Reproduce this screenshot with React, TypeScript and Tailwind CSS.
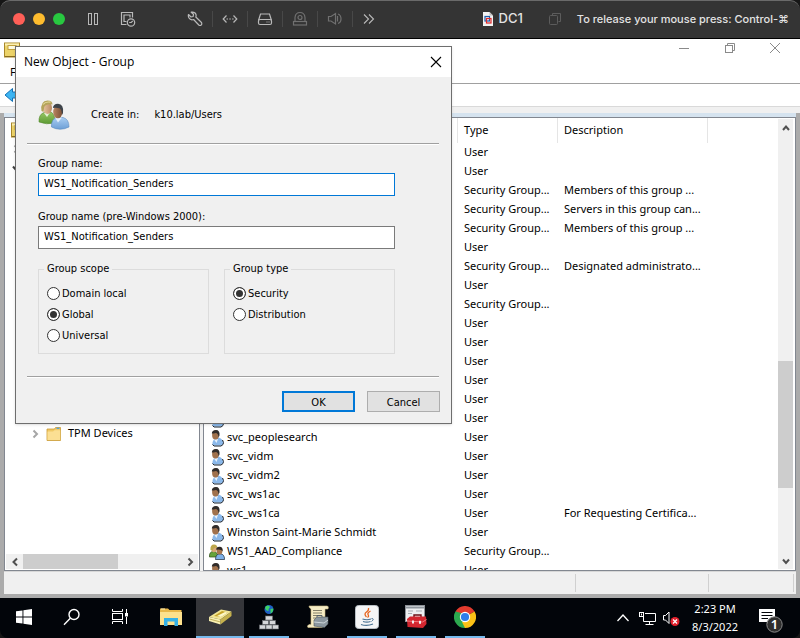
import React, { useState } from 'react';
import clsx from 'clsx';

type Kind = 'user' | 'group';

interface DirectoryEntry {
  kind: Kind;
  name?: string;
  type: string;
  description?: string;
}

const user = (name?: string, description?: string): DirectoryEntry => ({
  kind: 'user',
  name,
  type: 'User',
  description,
});

const group = (description?: string, name?: string): DirectoryEntry => ({
  kind: 'group',
  name,
  type: 'Security Group...',
  description,
});

const ENTRIES: DirectoryEntry[] = [
  user(),
  user(),
  group('Members of this group ...'),
  group('Servers in this group can...'),
  group('Members of this group ...'),
  user(),
  group('Designated administrato...'),
  user(),
  group(),
  user(),
  user(),
  user(),
  user(),
  user(),
  user('svc_'),
  user('svc_peoplesearch'),
  user('svc_vidm'),
  user('svc_vidm2'),
  user('svc_ws1ac'),
  user('svc_ws1ca', 'For Requesting Certifica...'),
  user('Winston Saint-Marie Schmidt'),
  group('', 'WS1_AAD_Compliance'),
  user('ws1'),
];

const UserIcon = () => (
  <svg width="16" height="18" viewBox="0 0 16 18" className="shrink-0">
    <path d="M3.500 16 Q3 11 6.500 9.500 L9.500 8.500 Q13.500 9.500 14 13 L14 15 L12 16.500 L5 16.500 Z" fill="#8ab8ea" />
    <path d="M13.500 11 L14.500 13.500 L14 15.500 L12 17 H5 L3.500 15.500" fill="none" stroke="#1b2430" />
    <path d="M5 10.500 L7.500 14 L9 10 Z" fill="#e8f2fd" />
    <ellipse cx="6.500" cy="6" rx="3.400" ry="4.500" fill="#a0714c" />
    <path d="M2.800 4.500 Q3 1 7 1 Q11 1 10.500 6.500 L9.500 8.500 Q9.500 4.500 7 4 Q4.500 4.500 2.800 4.500 Z" fill="#302c2a" />
  </svg>
);

const GroupIcon = () => (
  <svg width="16" height="16" viewBox="0 0 16 16" className="shrink-0">
    <path d="M0.500 13 Q0 7.500 4.500 7.500 Q8.500 7.500 9 13 Z" fill="#67a33b" stroke="#2b4a16" strokeWidth="0.7" />
    <ellipse cx="5" cy="4.600" rx="2.800" ry="3.600" fill="#d9a877" />
    <path d="M1.500 6 Q1 0.500 5 0.500 Q8.500 0.500 8.300 4 Q5 2.500 3.500 6.500 Z" fill="#bda64a" />
    <path d="M6.500 15.500 Q6.500 10 11 9.800 Q15.500 9.800 15.600 15.500 Z" fill="#7fb0e6" stroke="#1d2a3a" strokeWidth="0.7" />
    <ellipse cx="10.500" cy="7" rx="2.900" ry="3.600" fill="#a8754c" />
    <path d="M7.200 5.800 Q7 2.800 10.500 2.800 Q14.300 2.800 13.600 7.500 Q12.500 5 7.200 5.800 Z" fill="#2b2522" />
  </svg>
);

const GroupLargeIcon = () => (
  <svg width="32" height="32" viewBox="0 0 32 32" className="shrink-0">
    <defs>
      <linearGradient id="green-shirt" x1="0" x2="0" y1="0" y2="1">
        <stop offset="0" stopColor="#97c765" />
        <stop offset="1" stopColor="#5c9a33" />
      </linearGradient>
      <linearGradient id="blue-shirt" x1="0" x2="0" y1="0" y2="1">
        <stop offset="0" stopColor="#a9cdf2" />
        <stop offset="1" stopColor="#6d9fd6" />
      </linearGradient>
      <linearGradient id="face-left" x1="0" x2="1">
        <stop offset="0" stopColor="#e6c3a0" />
        <stop offset="1" stopColor="#b98a62" />
      </linearGradient>
      <linearGradient id="face-right" x1="0" x2="1">
        <stop offset="0" stopColor="#b98560" />
        <stop offset="1" stopColor="#7a4f35" />
      </linearGradient>
    </defs>
    <path d="M1 23 Q0.500 15.500 6 13.500 L13 13 Q17 15 17 24 Q8 26 1 23 Z" fill="url(#green-shirt)" stroke="#548a2e" strokeWidth="0.6" />
    <path d="M6 14 L9 18 L12 13.500 Z" fill="#e3f1d4" />
    <ellipse cx="9.500" cy="9" rx="4.500" ry="6" fill="url(#face-left)" />
    <path d="M3.500 12 Q2 2 9.500 1.500 Q14.500 1.500 14.500 5.500 Q8 4.500 6.200 8 L5.500 13 Z" fill="#b5a45a" />
    <path d="M5 5.500 Q7.500 2.300 12.500 3.200" stroke="#e2d898" strokeWidth="1.200" fill="none" />
    <path d="M13.500 28 Q13 20 19 18.500 L25 18.500 Q31 20 31 28 Q22 32.500 13.500 28 Z" fill="url(#blue-shirt)" stroke="#5788bf" strokeWidth="0.6" />
    <path d="M17 18.500 L20 23.500 L24 18.500 Z" fill="#e4effb" />
    <ellipse cx="19.800" cy="13" rx="4.600" ry="6.300" fill="url(#face-right)" />
    <path d="M15 9 Q15 5 20 4.800 Q26 5 25 14 L24 16 Q24 11 21.500 9.200 Q18 8.500 15 9 Z" fill="#3e4349" />
  </svg>
);

const DirectoryIcon = () => (
  <svg width="16" height="16" viewBox="0 0 16 16" className="shrink-0">
    <rect x="0.500" y="1" width="15" height="14" fill="#ecd36a" stroke="#a8872a" />
    <rect x="1" y="1.500" width="14" height="2" fill="#fbf0b4" />
    <rect x="4" y="3.500" width="8" height="4" fill="#fffbe0" stroke="#c1a03c" />
    <path d="M1 14.500 H15" stroke="#8a6c1d" />
  </svg>
);

const FolderIcon = () => (
  <svg width="16" height="16" viewBox="0 0 16 16" className="shrink-0">
    <path d="M1 14.500 V3 H8.500 L9.500 1.500 H14.500 V14.500 Z" fill="#f0c965" stroke="#c99a35" strokeWidth="0.8" />
    <path d="M10.500 2.300 H13.500" stroke="#4a9fe0" strokeWidth="1.200" />
    <path d="M1.500 14 V5.500 H7 L8.500 4.200 H14.200 V14 Z" fill="#fbdf93" />
  </svg>
);

const Chevron = ({ dir, className }: { dir: 'up' | 'down' | 'left' | 'right'; className?: string }) => {
  const paths = {
    up: 'M2 7 L5 3.500 L8 7',
    down: 'M2 3.500 L5 7 L8 3.500',
    left: 'M7 1.500 L3.500 5 L7 8.500',
    right: 'M3.500 1.500 L7 5 L3.500 8.500',
  };
  return (
    <svg width="10" height="10" viewBox="0 0 10 10" className={className}>
      <path d={paths[dir]} fill="none" stroke="currentColor" strokeWidth="2" />
    </svg>
  );
};

const BarSeparator = () => <span className="h-4 w-px bg-[#484848]" />;

const VmToolbar = () => (
  <header className="flex h-[39px] shrink-0 items-center rounded-t-[10px] border-t border-b border-t-[#6a6a6a] border-b-black bg-[#343434] pr-[11px] pb-px pl-[13px] font-['Inter',sans-serif] text-[#e3e3e3]">
    <div className="flex gap-2">
      <button aria-label="Close" className="size-3 rounded-full bg-[#ff5f57]" />
      <button aria-label="Minimize" className="size-3 rounded-full bg-[#febc2e]" />
      <button aria-label="Zoom" className="size-3 rounded-full bg-[#28c840]" />
    </div>
    <div className="ml-5 flex gap-[19px] text-[#b9b9b9]">
      <button aria-label="Pause">
        <svg width="16" height="16" viewBox="0 0 16 16" fill="none" stroke="currentColor">
          <rect x="3.500" y="2.500" width="3" height="11" />
          <rect x="9.500" y="2.500" width="3" height="11" />
        </svg>
      </button>
      <button aria-label="Snapshots">
        <svg width="16" height="16" viewBox="0 0 16 16" fill="none" stroke="currentColor" strokeWidth="1.200">
          <path d="M6.500 13.500 H1.500 V1.500 H12.500 V6.500" />
          <path d="M6.500 10.500 H4 V4 H10 V6.500" />
          <circle cx="11" cy="11.500" r="3.700" />
          <path d="M9.200 11.500 H11.200 L12.800 9.800" />
        </svg>
      </button>
    </div>
    <div className="ml-[51px] flex items-center gap-[9px] text-[#b9b9b9]">
      <button aria-label="Settings">
        <svg width="16" height="16" viewBox="0 0 16 16" fill="none" stroke="currentColor" strokeWidth="1.200" strokeLinejoin="round">
          <path d="M1.500 3.500 L4 6 L6.200 5.500 L6.500 3.200 L4.200 1.200 Q8 0.500 9 3.500 Q9.300 5 8.800 6 L14.500 11.500 Q15.200 13 14.200 14 Q13 15 11.800 14 L6.600 8.500 Q3.500 9.500 2 7 Q1 5.500 1.500 3.500 Z" />
        </svg>
      </button>
      <BarSeparator />
      <button aria-label="Network adapter">
        <svg width="16" height="16" viewBox="0 0 16 16" fill="none" stroke="currentColor" strokeWidth="1.200">
          <path d="M4.500 4.500 L1.200 8 L4.500 11.500 M11.500 4.500 L14.800 8 L11.500 11.500" />
          <path d="M4.500 8 H12" strokeDasharray="1.500 1.300" />
        </svg>
      </button>
      <BarSeparator />
      <button aria-label="Hard disk">
        <svg width="16" height="16" viewBox="0 0 16 16" fill="none" stroke="currentColor" strokeWidth="1.200">
          <path d="M1.500 9.500 L3.500 3 H12.500 L14.500 9.500" />
          <rect x="1.500" y="8.500" width="13" height="5" rx="1.500" />
          <path d="M9.500 11 H10.500 M11.500 11 H12.500" />
        </svg>
      </button>
      <BarSeparator />
      <button aria-label="Camera" className="text-[#707070]">
        <svg width="16" height="16" viewBox="0 0 16 16" fill="none" stroke="currentColor" strokeWidth="1.200">
          <path d="M3 10.500 V6.500 Q3.500 1.500 8 1.500 Q12.500 1.500 13 6.500 V10.500" />
          <circle cx="8" cy="6.500" r="2" />
          <rect x="1.500" y="10.500" width="13" height="3.500" />
        </svg>
      </button>
      <BarSeparator />
      <button aria-label="Sound" className="text-[#707070]">
        <svg width="16" height="16" viewBox="0 0 16 16" fill="none" stroke="currentColor" strokeWidth="1.200">
          <path d="M1.500 5.500 H4 L8.500 2.500 V13 L4 10 H1.500 Z M10.500 5 V10.500" />
          <path d="M11 3 Q14 4 14 7.800 Q14 11.500 11 12.500" />
        </svg>
      </button>
      <BarSeparator />
      <button aria-label="More">
        <svg width="16" height="16" viewBox="0 0 16 16" fill="none" stroke="currentColor" strokeWidth="1.100">
          <path d="M2 3.500 L6.500 8 L2 12.500 M7 3.500 L11.500 8 L7 12.500" />
        </svg>
      </button>
    </div>
    <div className="ml-auto flex items-center">
      <svg width="16" height="16" viewBox="0 0 16 16">
        <path d="M3 1 H9.500 L13 4.500 V15 H3 Z" fill="#f2f2f2" />
        <path d="M9.500 1 V4.500 H13 Z" fill="#bdbdbd" />
        <rect x="5" y="5.500" width="4.500" height="4.500" fill="none" stroke="#1c5fb0" strokeWidth="1.200" />
        <rect x="6.500" y="7.500" width="4.500" height="4.500" fill="none" stroke="#e02929" strokeWidth="1.200" />
      </svg>
      <h1 className="ml-[3px] text-[13px] font-medium">DC1</h1>
      <button aria-label="Window mode" className="ml-6 text-[#5c5c5c]">
        <svg width="16" height="16" viewBox="0 0 16 16" fill="none" stroke="currentColor">
          <path d="M5.500 4.500 V2.500 H13.500 V10.500 H11.500" />
          <rect x="2.500" y="4.500" width="8" height="9" rx="1" />
        </svg>
      </button>
      <span className="ml-[14px] text-[11px] font-medium whitespace-nowrap">To release your mouse press: Control-⌘</span>
    </div>
  </header>
);

const WindowChrome = () => (
  <div className="shrink-0 bg-white">
    <div className="flex h-[22px] items-start pl-1 text-[#8a8a8a]">
      <div className="flex items-center gap-[5px] pt-[3px]">
        <DirectoryIcon />
        <span className="leading-4">Active Directory Users and Computers</span>
      </div>
      <div className="ml-auto flex pr-[2px]">
        <button aria-label="Minimize" className="flex h-[18px] w-[46px] items-center justify-center">
          <svg width="10" height="10" viewBox="0 0 10 10" stroke="currentColor"><path d="M0 5.500 H10" /></svg>
        </button>
        <button aria-label="Restore" className="flex h-[18px] w-[45px] items-center justify-center">
          <svg width="10" height="10" viewBox="0 0 10 10" fill="none" stroke="currentColor">
            <rect x="0.500" y="2.500" width="7" height="7" />
            <path d="M2.500 2.500 V0.500 H9.500 V7.500 H7.500" />
          </svg>
        </button>
        <button aria-label="Close" className="flex h-[18px] w-[46px] items-center justify-center">
          <svg width="10" height="10" viewBox="0 0 10 10" stroke="currentColor"><path d="M0 0 L10 10 M10 0 L0 10" /></svg>
        </button>
      </div>
    </div>
    <nav className="flex h-[22px] items-center pl-[10px] text-black">
      <button>File</button>
    </nav>
    <div className="flex h-[23px] items-center border-t border-t-[#a0a0a0] pl-1">
      <button aria-label="Back">
        <svg width="16" height="16" viewBox="0 0 16 16">
          <path d="M1 8 L8.500 1.500 V5 H15.500 V11 H8.500 V14.500 Z" fill="#3db5f2" stroke="#1572b6" />
        </svg>
      </button>
    </div>
    <div className="h-[7px] border-t border-t-[#d9d9d9] bg-[#f0f0f0]" />
  </div>
);

const TreePane = () => (
  <aside className="flex w-[196px] shrink-0 flex-col border border-[#828790] bg-white p-px">
    <ul className="min-h-0 flex-1 overflow-hidden pt-px">
      <li className="flex h-[19px] items-center pl-[5px]"><DirectoryIcon /></li>
      <li className="flex h-[19px] items-center pl-[5px] text-[#a0a0a0]"><Chevron dir="right" /></li>
      <li className="flex h-[19px] items-center pl-[5px] text-[#404040]"><Chevron dir="down" /></li>
      {Array.from({ length: 13 }, (_, i) => (
        <li key={i} className="h-[19px]" />
      ))}
      <li className="flex h-[19px] items-center pl-6">
        <Chevron dir="right" className="text-[#a6a6a6]" />
        <span className="ml-[6px]"><FolderIcon /></span>
        <span className="ml-[6px]">TPM Devices</span>
      </li>
    </ul>
    <div className="flex h-[15px] shrink-0 bg-[#f0f0f0] text-[#505050]">
      <button aria-label="Scroll left" className="flex w-[17px] items-center justify-center"><Chevron dir="left" /></button>
      <div className="flex flex-1">
        <div className="w-3/5 bg-[#cdcdcd]" />
      </div>
      <button aria-label="Scroll right" className="flex w-[17px] items-center justify-center"><Chevron dir="right" /></button>
    </div>
  </aside>
);

const ListPane = () => (
  <section className="flex min-w-0 flex-1 border border-[#828790] bg-white">
    <div className="min-h-0 min-w-0 flex-1 overflow-hidden">
      <table className="w-full table-fixed border-separate border-spacing-0 text-left whitespace-nowrap">
        <colgroup>
          <col className="w-[254px]" />
          <col className="w-[100px]" />
          <col className="w-[150px]" />
          <col />
        </colgroup>
        <thead>
          <tr className="h-[25px]">
            <th className="border-r border-r-[#e5e5e5] p-0 pl-[6px] font-normal" aria-label="Name" />
            <th className="border-r border-r-[#e5e5e5] p-0 pl-[6px] font-normal">Type</th>
            <th className="border-r border-r-[#e5e5e5] p-0 pl-[6px] font-normal">Description</th>
            <th className="p-0" />
          </tr>
        </thead>
        <tbody>
          {ENTRIES.map((entry, i) => (
            <tr key={i} className="h-[19px]">
              <td className="p-0 pl-[5px]">
                <div className="flex h-[19px] items-center gap-[2px]">
                  {entry.kind === 'user' ? <UserIcon /> : <GroupIcon />}
                  {entry.name}
                </div>
              </td>
              <td className="p-0 pl-[6px]">{entry.type}</td>
              <td className="p-0 pl-[6px]">{entry.description}</td>
              <td className="p-0" />
            </tr>
          ))}
        </tbody>
      </table>
    </div>
    <div className="my-px mr-[2px] flex w-[15px] shrink-0 flex-col bg-[#f0f0f0] text-[#505050]">
      <button aria-label="Scroll up" className="flex h-[17px] items-center justify-center"><Chevron dir="up" /></button>
      <div className="flex-[225]" />
      <div className="flex-[127] bg-[#cdcdcd]" />
      <div className="flex-[64]" />
      <button aria-label="Scroll down" className="flex h-[17px] items-center justify-center"><Chevron dir="down" /></button>
    </div>
  </section>
);

interface RadioGroupProps {
  title: string;
  name: string;
  options: string[];
  value: string;
  onChange: (value: string) => void;
}

const RadioGroup = ({ title, name, options, value, onChange }: RadioGroupProps) => (
  <fieldset className="border border-[#dcdcdc] px-2 pt-[6px] pb-[7px]">
    <legend className="-ml-[3px] px-[3px] leading-4">{title}</legend>
    {options.map((option) => (
      <label key={option} className="flex h-[21px] items-center gap-[2px]">
        <input
          type="radio"
          name={name}
          checked={value === option}
          onChange={() => onChange(option)}
          className="size-[13px] appearance-none rounded-full border border-[#333] bg-white checked:bg-[#333] checked:shadow-[inset_0_0_0_2px_#fff]"
        />
        <span className="pt-px">{option}</span>
      </label>
    ))}
  </fieldset>
);

const Divider = () => <div className="mr-3 ml-[11px] h-[2px] border-t border-t-[#a0a0a0] bg-white" />;

const NewGroupDialog = () => {
  const [name, setName] = useState('WS1_Notification_Senders');
  const [legacyName, setLegacyName] = useState('WS1_Notification_Senders');
  const [scope, setScope] = useState('Global');
  const [type, setType] = useState('Security');

  return (
    <div
      role="dialog"
      aria-label="New Object - Group"
      className="absolute top-[7px] left-[15px] w-[437px] border border-[#6e6e6e] bg-[#f0f0f0] font-['DejaVu_Sans_Condensed','Noto_Sans',sans-serif] text-[11px] text-black shadow-sm"
    >
      <div className="flex h-[30px] items-center justify-between bg-white pr-[9px] pl-2 font-['Open_Sans',sans-serif] text-[12px]">
        <h2>New Object - Group</h2>
        <button aria-label="Close">
          <svg width="12" height="12" viewBox="0 0 12 12" stroke="currentColor" strokeWidth="1.100">
            <path d="M1 1 L11 11 M11 1 L1 11" />
          </svg>
        </button>
      </div>
      <div className="flex h-[54px] items-end pl-[22px]">
        <GroupLargeIcon />
        <div className="ml-[21px] flex h-8 items-center gap-[15px] pt-px">
          <span>Create in:</span>
          <span>k10.lab/Users</span>
        </div>
      </div>
      <div className="mt-3">
        <Divider />
      </div>
      <div className="pr-14 pl-[22px]">
        <label htmlFor="group-name" className="mt-[11px] block leading-4">Group name:</label>
        <input
          id="group-name"
          value={name}
          onChange={(e) => setName(e.target.value)}
          className="mt-px block h-[23px] w-full border border-[#0078d7] bg-white px-[5px] pb-[2px] outline-none"
        />
        <label htmlFor="legacy-name" className="mt-[13px] block leading-4">Group name (pre-Windows 2000):</label>
        <input
          id="legacy-name"
          value={legacyName}
          onChange={(e) => setLegacyName(e.target.value)}
          className="mt-px block h-[23px] w-full border border-[#7a7a7a] bg-white px-[5px] pb-[2px] outline-none"
        />
        <div className="mt-3 grid grid-cols-2 gap-[15px]">
          <RadioGroup title="Group scope" name="scope" options={['Domain local', 'Global', 'Universal']} value={scope} onChange={setScope} />
          <RadioGroup title="Group type" name="type" options={['Security', 'Distribution']} value={type} onChange={setType} />
        </div>
      </div>
      <div className="mt-[22px]">
        <Divider />
      </div>
      <div className="mt-[13px] mb-[11px] flex justify-end gap-3 pr-[11px]">
        <button className="h-[21px] w-[73px] border-2 border-[#0078d7] bg-[#e1e1e1] leading-[19px]">OK</button>
        <button className="h-[21px] w-[73px] border border-[#adadad] bg-[#e1e1e1] pt-px leading-[19px]">Cancel</button>
      </div>
    </div>
  );
};

interface TaskButtonProps {
  label: string;
  active?: boolean;
  running?: boolean;
  children: React.ReactNode;
}

const TaskButton = ({ label, active, running, children }: TaskButtonProps) => (
  <button
    aria-label={label}
    className={clsx('flex h-full w-12 flex-col items-center', active && 'bg-[#35363a]')}
  >
    <span className="flex flex-1 items-center">{children}</span>
    <span className={clsx('h-[2px]', active ? 'w-full' : 'w-10', (active || running) && 'bg-[#76b9ed]')} />
  </button>
);

const Taskbar = () => (
  <footer className="flex h-10 shrink-0 items-stretch rounded-b-[8px] bg-[#02050a] text-white">
    <TaskButton label="Start">
      <svg width="16" height="16" viewBox="0 0 16 16" fill="#fff">
        <path d="M0 2.300 L6.500 1.400 V7.500 H0 Z M7.400 1.300 L16 0 V7.500 H7.400 Z M0 8.400 H6.500 V14.600 L0 13.700 Z M7.400 8.400 H16 V16 L7.400 14.700 Z" />
      </svg>
    </TaskButton>
    <TaskButton label="Search">
      <svg width="18" height="18" viewBox="0 0 18 18" fill="none" stroke="#fff" strokeWidth="1.400">
        <circle cx="11" cy="6.500" r="5" />
        <path d="M7.300 10.200 L1 16.800" />
      </svg>
    </TaskButton>
    <TaskButton label="Task View">
      <svg width="18" height="18" viewBox="0 0 18 18" fill="none" stroke="#fff">
        <path d="M1.500 1 V3.500 H11.500 V1 M1.500 16 V13.500 H11.500 V16" />
        <rect x="1.500" y="5.500" width="10" height="6" />
        <path d="M15.500 1 V5 M15.500 9 V16" />
        <rect x="14.500" y="5.500" width="2" height="2.500" fill="#fff" />
      </svg>
    </TaskButton>
    <div className="ml-[3px] flex gap-px">
      <TaskButton label="File Explorer">
        <svg width="22" height="20" viewBox="0 0 22 20">
          <path d="M0 2.500 V1.500 H8 L9.500 3 H21.500 V18 H0 Z" fill="#e9b84a" />
          <path d="M1 2 H5" stroke="#fff3b8" />
          <path d="M0 5 H22 V18 H0 Z" fill="#fde18d" />
          <path d="M4 19 V11 H18 V19 H14.500 V14.500 H7.500 V19 Z" fill="#35b1e8" />
        </svg>
      </TaskButton>
      <TaskButton label="Active Directory Users and Computers" active>
        <svg width="24" height="18" viewBox="0 0 24 18">
          <path d="M1 9 L13 1.500 L23.500 3.500 L12.500 11.500 Z" fill="#f2e695" />
          <path d="M6 8 L14 3 L20 4.500 L13 9 Z" fill="#c7a52a" />
          <path d="M9 8 L17 4 L20 4.500 L13 9 Z" fill="#fdf8c8" />
          <path d="M1 9 L12.500 11.500 V16.500 L1 13 Z" fill="#f9f1b2" />
          <path d="M12.500 11.500 L23.500 3.500 V8 L12.500 16.500 Z" fill="#c5b14d" />
          <path d="M1.500 11 L12.500 14" stroke="#a89535" strokeWidth="0.700" />
        </svg>
      </TaskButton>
      <TaskButton label="DNS" running>
        <svg width="20" height="26" viewBox="0 0 20 26">
          <circle cx="10" cy="5.500" r="4.500" fill="#1d5fc4" />
          <path d="M7 2 Q10 0.500 11 3 Q9 5 9.500 7 Q7 7 6 4 Z M11.500 5 L14.300 4.500 Q14.500 8 11.500 9.500 Z" fill="#3dd165" />
          <g fill="#d5d7da" stroke="#686b70" strokeWidth="0.600">
            <rect x="6.500" y="12" width="7" height="4" />
            <rect x="3.500" y="16.500" width="6" height="4" />
            <rect x="10.500" y="16.500" width="6" height="4" />
            <rect x="0.500" y="21" width="6" height="4" />
            <rect x="7" y="21" width="6" height="4" />
            <rect x="13.500" y="21" width="6" height="4" />
          </g>
        </svg>
      </TaskButton>
      <TaskButton label="Event Viewer">
        <svg width="24" height="24" viewBox="0 0 24 24">
          <path d="M3 1 H21 Q23 1 22 4 H19 V20 L16 22.500 H2 Q0.500 21 3 19.500 H5 V4 Q3 3 3 1 Z" fill="#f5ecc5" stroke="#c9b980" strokeWidth="0.600" />
          <path d="M7 5.500 H16 M7 8 H16 M7 10.500 H13 M7 13 H10" stroke="#77745f" strokeWidth="0.900" />
          <path d="M11 12 V10.500 H16 V12" fill="none" stroke="#55606a" />
          <path d="M8 15 L11 12 H22 V19 L18.500 22.500 L8 21 Z" fill="#8b979f" stroke="#4b555c" strokeWidth="0.600" />
          <path d="M8 17 L18 18 L22 15" stroke="#ccd5da" fill="none" />
        </svg>
      </TaskButton>
      <TaskButton label="Java" running>
        <svg width="24" height="24" viewBox="0 0 24 24">
          <rect x="0.500" y="0.500" width="23" height="23" rx="3" fill="#f4f5f6" stroke="#b9c0c6" />
          <path d="M13.500 3 Q14 5.500 11.500 7 Q8.500 9 11.500 12 M15.500 6 Q11.500 8 13.500 10.500 Q14 11.500 12.500 12.500" fill="none" stroke="#e8641b" strokeWidth="1.300" />
          <path d="M7.500 14 Q12 15.500 16 14 M8 16.500 Q12 17.800 15.500 16.500 M6 19.500 Q12 21.500 18 19" fill="none" stroke="#4a7394" strokeWidth="1.200" />
          <path d="M16.500 13.500 Q20 13.500 16.500 16.500" fill="none" stroke="#4a7394" />
        </svg>
      </TaskButton>
      <TaskButton label="Server Manager" running>
        <svg width="22" height="24" viewBox="0 0 22 24">
          <rect x="0.500" y="0.500" width="19" height="16" fill="#eceef0" stroke="#8d9298" />
          <path d="M1 2.500 H19" stroke="#8f969e" strokeWidth="2" />
          <path d="M3 6 H8 M3 8.500 H7 M11 6 H17" stroke="#a5abb2" />
          <path d="M9 12 V10 H16 V12" fill="none" stroke="#6b0f14" strokeWidth="1.400" />
          <path d="M2 14 L5 11.500 H21 L21.500 19 L18 23 L2.500 22 Z" fill="#d2262f" />
          <path d="M2 16 L17.500 17 L21.500 14.500" fill="none" stroke="#f1797d" />
          <rect x="7" y="15.500" width="2" height="3" fill="#eee" />
          <rect x="14" y="15.800" width="2" height="3" fill="#eee" />
        </svg>
      </TaskButton>
      <TaskButton label="Chrome" running>
        <svg width="22" height="22" viewBox="0 0 22 22">
          <path d="M11 11 L1.470 5.500 A11 11 0 0 1 20.530 5.500 Z" fill="#e33b2e" />
          <path d="M11 11 L20.530 5.500 A11 11 0 0 1 11 22 Z" fill="#fbc116" />
          <path d="M11 11 L11 22 A11 11 0 0 1 1.470 5.500 Z" fill="#2da94f" />
          <path d="M11 6 H20.800 L20.530 5.500 H11 Z" fill="#e33b2e" />
          <path d="M15.300 13.500 L11 22 L8 16 Z" fill="#fbc116" />
          <path d="M1.470 5.500 L6.700 13.500 L11 8 Z" fill="#2da94f" />
          <circle cx="11" cy="11" r="5.200" fill="#fff" />
          <circle cx="11" cy="11" r="4.100" fill="#2f7de9" />
        </svg>
      </TaskButton>
    </div>
    <div className="ml-auto flex items-center pr-4">
      <button aria-label="Show hidden icons">
        <svg width="14" height="10" viewBox="0 0 14 10" fill="none" stroke="#fff" strokeWidth="1.300">
          <path d="M1.500 8 L7 2 L12.500 8" />
        </svg>
      </button>
      <button aria-label="Network" className="ml-[9px]">
        <svg width="17" height="16" viewBox="0 0 17 16" fill="none" stroke="#fff">
          <path d="M6 3.500 H16.500 V11.500 H4.500 V7" />
          <rect x="0.500" y="2.500" width="4" height="4" />
          <path d="M2.500 3.500 V5.500 M10.500 11.500 V14.500 M6.500 14.500 H14.500" />
        </svg>
      </button>
      <button aria-label="Volume" className="ml-[6px]">
        <svg width="18" height="16" viewBox="0 0 18 16">
          <path d="M1.500 5.500 H3.500 L7 2 V13.500 L3.500 10 H1.500 Z" fill="none" stroke="#fff" />
          <circle cx="13" cy="11.500" r="4.500" fill="#e2202c" />
          <path d="M11 9.500 L15 13.500 M15 9.500 L11 13.500" stroke="#fff" strokeWidth="1.300" />
        </svg>
      </button>
      <div className="ml-3 text-center leading-[18px]">
        <div>2:23 PM</div>
        <div>8/3/2022</div>
      </div>
      <button aria-label="Notifications, 1 new" className="ml-5">
        <svg width="26" height="30" viewBox="0 0 26 30">
          <path d="M1 6 H17 V19 H12 L9 22 V19 H1 Z" fill="#fff" />
          <path d="M3.500 9.500 H14.500 M3.500 12.500 H14.500 M3.500 15.500 H10" stroke="#02050a" />
          <circle cx="16.500" cy="21.500" r="7.700" fill="#2e2e2e" stroke="#8a8a8a" />
          <text x="16.500" y="26" textAnchor="middle" fill="#fff" fontSize="13" fontWeight="600">1</text>
        </svg>
      </button>
    </div>
  </footer>
);

export default function App() {
  return (
    <div className="flex h-screen flex-col overflow-hidden bg-[#161616] font-['Noto_Sans',sans-serif] text-[11px] text-black">
      <VmToolbar />
      <main className="relative flex min-h-0 flex-1 flex-col">
        <WindowChrome />
        <div className="flex min-h-0 flex-1 flex-col border-x-4 border-b-4 border-[#ababab]">
          <div className="flex min-h-0 flex-1 gap-[3px] border-t-4 border-t-[#d5e3ef] bg-[#f0f0f0]">
            <TreePane />
            <ListPane />
          </div>
          <div className="flex h-[23px] shrink-0 justify-end border-t border-t-[#d7d7d7] bg-[#f0f0f0] py-[2px] pr-[2px]">
            <div className="w-[133px] border-l border-l-[#d0d0d0]" />
            <div className="w-[86px] border-x border-x-[#d0d0d0]" />
          </div>
        </div>
        <NewGroupDialog />
      </main>
      <Taskbar />
    </div>
  );
}
